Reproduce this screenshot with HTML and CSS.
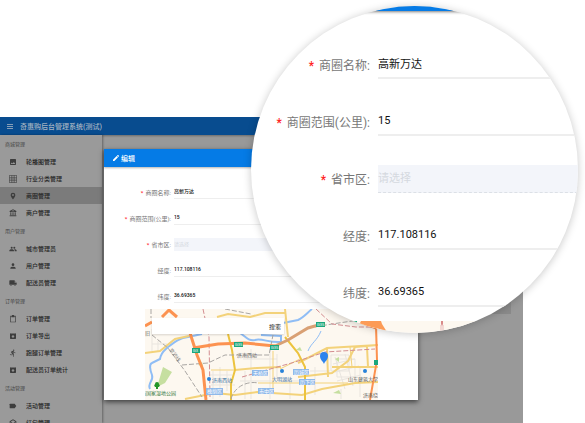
FILE: index.html
```html
<!DOCTYPE html>
<html lang="zh-CN">
<head>
<meta charset="utf-8">
<title>奇惠购后台管理系统(测试)</title>
<link rel="stylesheet" href="styles.css">
</head>
<body>
<div class="app">
  <header class="topbar">
    <svg class="icon" viewBox="0 0 8 8"><path d="M1 2h6v1H1zM1 4h6v1H1zM1 6h6v1H1z" opacity=".8"/></svg>
    <span>奇惠购后台管理系统(测试)</span>
  </header>
  <div class="workspace">
    <nav class="sidebar">
      <section class="group">
        <h2>商城管理</h2>
        <a href="#"><svg class="icon" viewBox="0 0 24 24"><path d="M21 19V5a2 2 0 0 0-2-2H5a2 2 0 0 0-2 2v14c0 1.100.900 2 2 2h14a2 2 0 0 0 2-2zM8.500 13.500l2.500 3 3.500-4.500 4.500 6H5z"/></svg>轮播图管理</a>
        <a href="#"><svg class="icon" viewBox="0 0 24 24"><path fill="none" stroke="currentColor" stroke-width="2" d="M1 1h22v22H1zM8.500 1v22M15.500 1v22M1 8.500h22M1 15.500h22"/></svg>行业分类管理</a>
        <a href="#" class="active"><svg class="icon" viewBox="0 0 24 24"><path fill-rule="evenodd" d="M12 2a7 7 0 0 0-7 7c0 5.200 7 13 7 13s7-7.800 7-13a7 7 0 0 0-7-7zm0 4a3 3 0 1 1 0 6 3 3 0 0 1 0-6z"/></svg>商圈管理</a>
        <a href="#"><svg class="icon" viewBox="0 0 24 24"><path fill-rule="evenodd" d="M12 1 2 6v3h20V6zm0 2.500L17 7H7zM4 10h3v8H4zm6.500 0h3v8h-3zM17 10h3v8h-3zM2 19h20v3H2z"/></svg>商户管理</a>
      </section>
      <section class="group">
        <h2>用户管理</h2>
        <a href="#"><svg class="icon" viewBox="0 0 24 24"><circle cx="8" cy="8" r="3"/><circle cx="16" cy="8" r="3"/><path d="M1 19v-2.500C1 14 5.500 13 8 13s7 1 7 3.500V19zM16 13c3 0 7 1 7 3.500V19h-6v-2.500c0-1.500-.7-2.500-2-3.400z"/></svg>城市管理员</a>
        <a href="#"><svg class="icon" viewBox="0 0 24 24"><circle cx="12" cy="8" r="4"/><path d="M4 20v-2c0-2.700 5.300-4 8-4s8 1.300 8 4v2z"/></svg>用户管理</a>
        <a href="#"><svg class="icon" viewBox="0 0 24 24"><path fill-rule="evenodd" d="M20 8h-3V4H3a2 2 0 0 0-2 2v11h2a3 3 0 0 0 6 0h6a3 3 0 0 0 6 0h2v-5zM6 15.500a1.500 1.500 0 1 1 0 3 1.500 1.500 0 0 1 0-3zm12 0a1.500 1.500 0 1 1 0 3 1.500 1.500 0 0 1 0-3zM17 9.500h2.500l2 2.500H17z"/></svg>配送员管理</a>
      </section>
      <section class="group">
        <h2>订单管理</h2>
        <a href="#"><svg class="icon" viewBox="0 0 24 24"><path fill-rule="evenodd" d="M19 2h-4a3 3 0 0 0-6 0H5a2 2 0 0 0-2 2v16c0 1.100.900 2 2 2h14a2 2 0 0 0 2-2V4a2 2 0 0 0-2-2zm0 18H5V4h2v3h10V4h2z"/></svg>订单管理</a>
        <a href="#"><svg class="icon" viewBox="0 0 24 24"><path fill-rule="evenodd" d="M5 3h14l2 3v13a2 2 0 0 1-2 2H5a2 2 0 0 1-2-2V6zm0 2h14l-1-1H6zm7 13 5-5h-3v-3h-4v3H7z"/></svg>订单导出</a>
        <a href="#"><svg class="icon" viewBox="0 0 24 24"><circle cx="14" cy="3.500" r="2"/><path d="m10 19 1-4.400 2 2V23h2v-8l-2-2 .6-3c1.300 1.500 3.200 2.500 5.400 2.500v-2c-2 0-3.500-1-4.300-2.400l-1-1.600c-.4-.6-1-1-1.700-1L6 8v5h2V9.500l2-.8L8.200 17l-5-1-.4 2z"/></svg>跑腿订单管理</a>
        <a href="#"><svg class="icon" viewBox="0 0 24 24"><path fill-rule="evenodd" d="M5 3h14l2 3v13a2 2 0 0 1-2 2H5a2 2 0 0 1-2-2V6zm0 2h14l-1-1H6zm7 13 5-5h-3v-3h-4v3H7z"/></svg>配送员订单统计</a>
      </section>
      <section class="group">
        <h2>活动管理</h2>
        <a href="#"><svg class="icon" viewBox="0 0 24 24"><path d="M17 5H4a2 2 0 0 0-2 2v10c0 1.100.900 2 2 2h13l5-7z"/></svg>活动管理</a>
        <a href="#"><svg class="icon" viewBox="0 0 24 24"><path fill-rule="evenodd" d="M12 1 2 7v13c0 1.100.900 2 2 2h16a2 2 0 0 0 2-2V7zm0 2.500L19 8l-7 4.500L5 8zM4 10l8 5 8-5v10H4z"/></svg>红包管理</a>
      </section>
    </nav>
    <main class="content"><div class="panel"></div></main>
  </div>

  <div class="dialog" role="dialog" aria-label="编辑">
    <div class="dialog-head">
      <svg class="icon" viewBox="0 0 24 24"><path d="M3 17v4h4L18 10l-4-4zM20.700 7a1 1 0 0 0 0-1.400l-2.300-2.300a1 1 0 0 0-1.400 0L15 5l4 4z"/></svg>
      <span>编辑</span>
    </div>
    <form class="form">
      <div class="row"><label class="required" for="name">商圈名称:</label><input id="name" value="高新万达"></div>
      <div class="row"><label class="required" for="range">商圈范围(公里):</label><input id="range" value="15"></div>
      <div class="row"><label class="required" for="region">省市区:</label><select id="region"><option>请选择</option></select></div>
      <div class="row"><label for="lng">经度:</label><input id="lng" value="117.108116"></div>
      <div class="row"><label for="lat">纬度:</label><input id="lat" value="36.69365"></div>
    </form>
    <div class="map">
      <svg class="map-art" viewBox="0 0 233 91" preserveAspectRatio="xMinYMin slice">
        <g fill="none" stroke="#e9e5df" stroke-width="1">
          <path d="M7 20v22M13 32v10M7 35h15M68 62v28M75 58v30M82 62v20M65 66h22M66 76h24M100 62v28M106 40v50M125 40v50M132 45v25M145 68v22M95 72h60M98 50h34M170 58v28M190 48l10 32M200 45l8 32M188 55l22-5M190 63l24-6M192 72l24-6M165 62h20M196 80v10M215 58v30"/>
          <path d="M186 46h18v16h-18zM192 50h18v18h-18z"/>
        </g>
        <path fill="#c6dfa0" d="m18 58 9 5-7 11-8 4zM151 41l4-3 2 4zM188 84l6-3 2 4zM190 50l4-2v5zM53 56l4-3 1 4z"/>
        <g fill="none" stroke="#8fbdf5" stroke-width="2">
          <path d="M5 80c-3-6 4-8 2-14-2-5-3-11 0-12l8-4c1-7 5-9 8-12 8-6 12-9 20-10l14-3"/>
          <path d="M95 24c6 4 8 8 15 7 7-2 14 3 26 2v-6l-20-1M138 14l15-3c6-3 9-7 14-11" />
          <path stroke-width="1" d="M163 42c3-8 9-10 13-20"/>
        </g>
        <g fill="none" stroke="#f3d27a" stroke-width="2">
          <path d="M0 44l15-2 15-12 14-3M72 8l11-3 22 3 15-4h20M90 61l22-2 24-1M40 90l30-6 20 2 22-3 45 3 20-6 33-6 23-1"/>
          <path d="M153 54l29-15 51-3M182 39l1 29M153 68l34-4 16-12 7-14 23-2M187 58h46M222 38l1 20M140 0l3 28"/>
        </g>
        <path fill="none" stroke="#f3d27a" d="M128 42v38M205 38l2 20M66 61h24M135 60l20-10M113 74h90"/>
        <path fill="none" stroke="#ecc33e" stroke-width="2" d="M83 25l4 16 3 20-4 14v16M140 28l13 16 7 14v33"/>
        <g fill="none" stroke="#a9a6a3" stroke-width="1" stroke-dasharray="5 2">
          <path d="M6 0v9M7 26l16 13 17 23 17 26M37 56l26-2 17-8h44l4-20M163 19l24-4 27-4M80 0l26 5M86 90c4-14 18-18 27-16"/>
        </g>
        <g fill="none" stroke="#d38d91" stroke-width="1" stroke-dasharray="5 2">
          <path d="M58 0l6 28 1 60M97 68l53-15 30-10 50-3M171 0l16 15 24 3h20"/>
        </g>
        <path fill="none" stroke="#d9a074" stroke-width="3" d="M130 37l13-6 20-12 14-4"/>
        <path fill="none" stroke="#fc9250" stroke-width="3" d="M0 17l7-4M17 8l7-7 8 7M45 24l7 22 6 15 3 30M48 39l25-4 27-1 30 3"/>
        <path fill="none" stroke="#fc9250" stroke-width="2" d="M231 18l1 33-7 40"/>
        <path fill="#fc9250" d="M216 10l16 1v10l-10-4-8-3z"/>
        <g fill="#1ba77c"><path d="M47 39h8v5h-8zM89 33h9v5h-9zM171 13h9v5h-9zM125 36h9v5h-9zM229 51h4v5h-4z"/></g>
        <g fill="#fff" font-size="4"><text x="48" y="43">G3</text><text x="90" y="37">G35</text><text x="172" y="17">G35</text><text x="126" y="40">G35</text></g>
        <g fill="#8fb9ea"><path d="M61 79h17v7H61zM107 61h16v6h-16zM148 60h16v6h-16zM154 70h16v6h-16zM113 79h16v6h-16z"/></g>
        <g fill="#fff" font-size="5"><text x="62" y="84">槐荫区</text><text x="108" y="66">天桥区</text><text x="149" y="65">历城区</text><text x="155" y="75">历下区</text><text x="114" y="84">市中区</text></g>
        <g font-size="5"><text fill="#336d9f" x="67" y="73">济南西站</text><text fill="#336d9f" x="127" y="72">大明湖站</text><text fill="#666" x="92" y="48">济南西动</text><text fill="#397c45" x="-4" y="86">南国家湿地公园</text><text fill="#555" x="203" y="72">山东建筑大学</text><text fill="#555" x="218" y="88">济南绕</text><text fill="#666" x="0" y="26">旧</text><text fill="#777" transform="translate(24 41) rotate(53)">京沪线</text></g>
        <g fill="#2782d8"><circle cx="64" cy="70" r="2"/><circle cx="137" cy="62" r="2"/><circle cx="220" cy="62" r="2"/></g>
        <path fill="#239528" d="M10 78a2 2 0 0 1 0-3 2 2 0 0 1 4 0 2 2 0 0 1 0 3h-1v2h-2v-2z"/>
        <path fill="#2e83ed" d="M179 55c-1-3-4-4-4-8a4 4 0 0 1 8 0c0 4-3 5-4 8z"/>
      </svg>
      <div class="search"><input aria-label="地址"><button type="button">搜索</button></div>
    </div>
  </div>
</div>

<div class="lens">
  <div class="lens-head"></div>
  <form class="form">
    <div class="row"><label class="required" for="name-zoom">商圈名称:</label><input id="name-zoom" value="高新万达"></div>
    <div class="row"><label class="required" for="range-zoom">商圈范围(公里):</label><input id="range-zoom" value="15"></div>
    <div class="row"><label class="required" for="region-zoom">省市区:</label><select id="region-zoom"><option>请选择</option></select></div>
    <div class="row"><label for="lng-zoom">经度:</label><input id="lng-zoom" value="117.108116"></div>
    <div class="row"><label for="lat-zoom">纬度:</label><input id="lat-zoom" value="36.69365"></div>
  </form>
  <svg class="lens-map" viewBox="0 0 240 14" preserveAspectRatio="xMinYMin slice">
    <path fill="#fdf8f0" d="M0 0h240v14H0z"/>
    <path fill="#fc9b56" d="M10 0h20l1 3 5 8-8-3-20-4z"/>
    <path fill="#1ba77c" d="M0 0h6v2H0z"/>
    <path fill="#d98a8a" d="M90 0h2v4h-2z"/>
    <path fill="none" stroke="#e8b9b9" d="M90 4h2v8h-2z"/>
  </svg>
</div>
</body>
</html>
```
FILE: styles.css
```css
* {
  box-sizing: border-box;
}

body {
  margin: 0;
  height: 100vh;
  padding: 117px 62px 0 0;
  position: relative;
  overflow: hidden;
  background: #fff;
  font-family: Roboto, "Noto Sans CJK SC", sans-serif;
}

input,
select,
button {
  font: inherit;
  color: inherit;
  margin: 0;
  padding: 0;
  border: 0;
  border-radius: 0;
  background: none;
  min-width: 0;
  appearance: none;
}

.icon {
  width: 8px;
  height: 8px;
  flex: none;
  fill: currentColor;
}

.app {
  position: relative;
  height: 100%;
  display: flex;
  flex-direction: column;
  overflow: hidden;
  background: #999;
}

.topbar {
  height: 18px;
  flex: none;
  display: flex;
  align-items: center;
  gap: 6px;
  padding-left: 6px;
  background: #084c8f;
  color: #a6b4c2;
  font-size: 7px;
  font-weight: 500;
  box-shadow: 0 1px 2px rgba(0, 0, 0, 0.3);
}

.workspace {
  flex: 1;
  min-height: 0;
  display: flex;
}

.sidebar {
  width: 102px;
  flex: none;
  background: #9a9a9a;
  box-shadow: 1px 0 2px rgba(0, 0, 0, 0.35);
  color: #252525;
}

.group {
  margin-bottom: 1px;
}

.group h2 {
  margin: 0;
  padding-left: 5px;
  font-size: 5px;
  line-height: 18px;
  font-weight: 400;
  color: #454545;
}

.group a {
  height: 17px;
  display: flex;
  align-items: center;
  gap: 9px;
  padding-left: 9px;
  font-size: 6px;
  font-weight: 500;
  color: inherit;
  text-decoration: none;
}

.group .icon {
  color: #3d3d3d;
}

.group .active {
  background: #7b7b7b;
}

.content {
  flex: 1;
  padding: 162px 12px 0 12px;
}

.panel {
  height: 17px;
  background: #8a8a8a;
}

.dialog {
  position: absolute;
  top: 32px;
  left: 104px;
  right: 105px;
  background: #fff;
  box-shadow: 0 2px 5px rgba(0, 0, 0, 0.6);
}

.dialog-head {
  height: 18px;
  display: flex;
  align-items: center;
  gap: 1px;
  padding-left: 8px;
  background: #057be6;
  color: #fff;
  font-size: 7px;
  font-weight: 500;
  box-shadow: 0 1px 2px rgba(0, 0, 0, 0.3);
}

.form {
  color: #111;
}

.row {
  display: grid;
  align-items: center;
}

.row label {
  text-align: right;
  color: #777;
  white-space: nowrap;
}

.required::before {
  content: "*";
  color: #f22;
  font-weight: 500;
  margin-right: 5px;
}

.row select {
  background: #f3f5fa;
  color: #d5d9df;
}

.dialog .form {
  padding: 12px 40px 0 0;
  font-size: 5px;
}

.dialog .row {
  height: 26px;
  grid-template-columns: 67px 1fr;
  gap: 3px;
}

.dialog .row label {
  font-size: 6px;
}

.dialog .required::before {
  margin-right: 2px;
}

.dialog .row input {
  height: 13px;
  padding-bottom: 2px;
  border-bottom: 1px solid #eee;
  font-weight: 500;
}

.dialog .row select {
  height: 13px;
}

.map {
  position: relative;
  margin: 0 40px 0 41px;
  background: #fdf8f0;
}

.map-art {
  display: block;
  width: 100%;
  height: 91px;
}

.search {
  position: absolute;
  top: 9px;
  left: 7px;
  width: 132px;
  height: 16px;
  display: flex;
  background: #fff;
  box-shadow: 0 1px 2px rgba(0, 0, 0, 0.15);
  font-size: 6px;
}

.search input {
  flex: 1;
}

.search button {
  width: 18px;
  color: #222;
}

.lens {
  position: absolute;
  top: 6px;
  right: 7px;
  width: 327px;
  aspect-ratio: 1;
  overflow: hidden;
  border-radius: 50%;
  background: #fff;
  box-shadow: 0 1px 8px rgba(0, 0, 0, 0.22);
}

.lens-head {
  height: 5px;
  background: #057be6;
  box-shadow: 0 1px 3px rgba(0, 0, 0, 0.5);
}

.lens .form {
  padding-top: 25px;
  font-size: 11px;
}

.lens .row {
  height: 57px;
  grid-template-columns: 119px 1fr;
  gap: 8px;
}

.lens .row label {
  font-size: 12px;
}

.lens .row input {
  height: 28px;
  padding-bottom: 1px;
  border-bottom: 2px solid #eee;
}

.lens .row select {
  height: 28px;
  border-bottom: 1px dashed #dce0e6;
}

.lens-map {
  display: block;
  height: 14px;
  width: 240px;
  margin-left: 100px;
}
```
